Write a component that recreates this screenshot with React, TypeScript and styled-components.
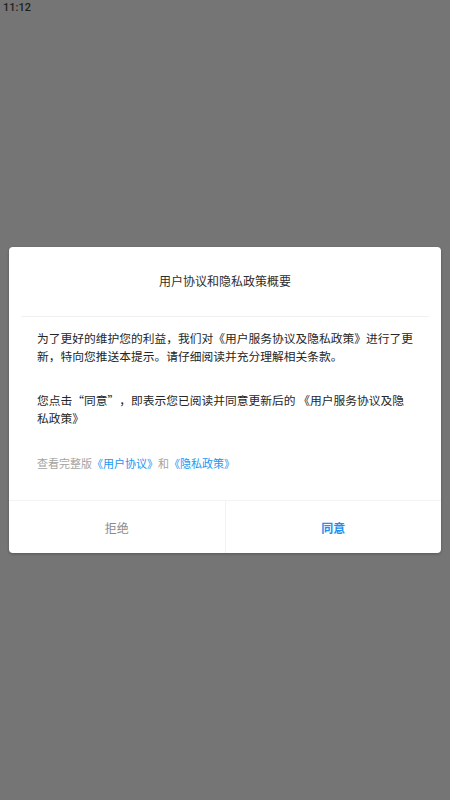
import { FC } from 'react';
import styled, { createGlobalStyle } from 'styled-components';

const GlobalStyle = createGlobalStyle`
  html, body {
    margin: 0;
    padding: 0;
    background: #757575;
  }
  body {
    font-family: "Noto Sans CJK SC", "Noto Sans", sans-serif;
  }
`;

const Screen = styled.div`
  position: relative;
  height: 800px;
  display: flex;
  align-items: center;
  justify-content: center;
  background: #757575;
`;

const StatusBar = styled.div`
  position: absolute;
  top: 0;
  left: 3px;
  height: 15px;
  line-height: 15px;
  font-family: Roboto, "Liberation Sans", sans-serif;
  font-size: 11px;
  font-weight: 500;
  color: #1f1f1f;
`;

const Dialog = styled.div`
  width: 432px;
  background: #fff;
  border-radius: 4px;
  box-shadow: 0 1px 3px rgba(0, 0, 0, 0.25);
  overflow: hidden;
  text-spacing-trim: space-all;
`;

const Title = styled.div`
  height: 69px;
  display: flex;
  align-items: center;
  justify-content: center;
  padding-bottom: 3px;
  box-sizing: border-box;
  font-size: 12px;
  color: #2e2e2e;
`;

const Divider = styled.div`
  height: 1px;
  margin: 0 12px;
  background: #f0f0f0;
`;

const Body = styled.div`
  padding: 12px 27px 28px 28px;
  font-size: 11.75px;
  line-height: 18px;
  color: #262626;
`;

const Paragraph = styled.p<{ $gap?: number }>`
  margin: ${(p) => p.$gap ?? 0}px 0 0;
`;

// curly quotes drawn full-width, as in the CJK layout of the original
const Quote = styled.span`
  font-feature-settings: "fwid" 1;
`;

const LinkLine = styled.p`
  margin: 27px 0 0;
  font-size: 11px;
  color: #a3a3a3;
`;

const Link = styled.span`
  color: #2196f3;
`;

const Footer = styled.div`
  display: flex;
  height: 52px;
  border-top: 1px solid #f3f3f3;
`;

const FooterButton = styled.button<{ $primary?: boolean }>`
  flex: 1;
  border: none;
  background: transparent;
  font-family: inherit;
  font-size: 12px;
  font-weight: ${(p) => (p.$primary ? 700 : 400)};
  color: ${(p) => (p.$primary ? '#1e8ff0' : '#8a8a8a')};
  cursor: pointer;
  & + & {
    border-left: 1px solid #f3f3f3;
  }
`;

const App: FC = () => {
  return (
    <>
      <GlobalStyle />
      <Screen>
        <StatusBar>11:12</StatusBar>
        <Dialog lang="zh-CN">
          <Title>用户协议和隐私政策概要</Title>
          <Divider />
          <Body>
            <Paragraph>
              为了更好的维护您的利益，我们对《用户服务协议及隐私政策》进行了更新，特向您推送本提示。请仔细阅读并充分理解相关条款。
            </Paragraph>
            <Paragraph $gap={26}>
              您点击<Quote>“</Quote>同意<Quote>”</Quote>，即表示您已阅读并同意更新后的 《用户服务协议及隐私政策》
            </Paragraph>
            <LinkLine>
              查看完整版<Link>《用户协议》</Link>和<Link>《隐私政策》</Link>
            </LinkLine>
          </Body>
          <Footer>
            <FooterButton>拒绝</FooterButton>
            <FooterButton $primary>同意</FooterButton>
          </Footer>
        </Dialog>
      </Screen>
    </>
  );
};

export default App;
